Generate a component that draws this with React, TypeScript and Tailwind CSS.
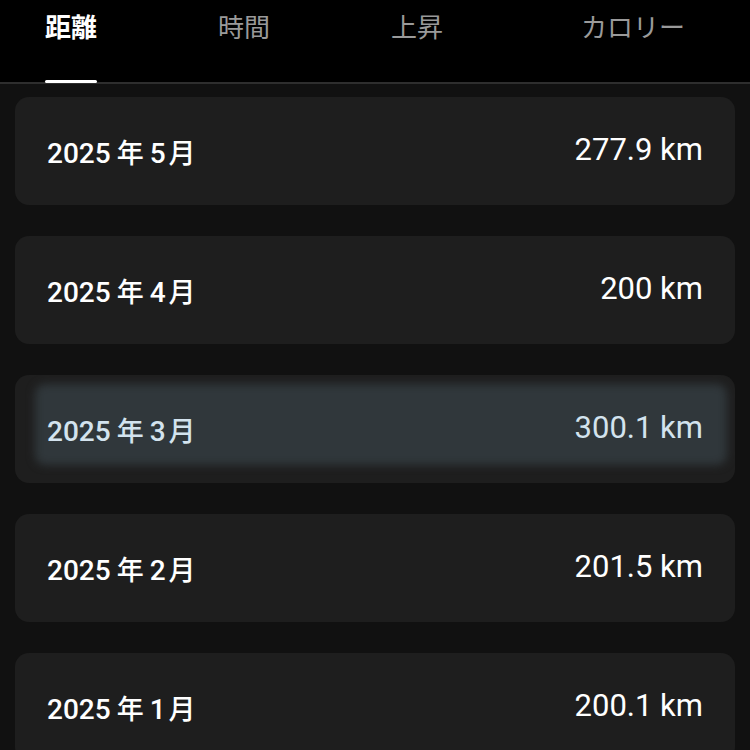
import React from 'react';

const tabs = [
  { label: '距離', active: true, cls: 'ml-[45px]' },
  { label: '時間', active: false, cls: 'ml-[121px]' },
  { label: '上昇', active: false, cls: 'ml-[121px]' },
  { label: 'カロリー', active: false, cls: 'ml-[138px]' },
];

const months = [
  { year: '2025', month: '5', value: '277.9 km' },
  { year: '2025', month: '4', value: '200 km' },
  { year: '2025', month: '3', value: '300.1 km', highlight: true },
  { year: '2025', month: '2', value: '201.5 km' },
  { year: '2025', month: '1', value: '200.1 km' },
];

export default function App() {
  return (
    <div className="w-[750px] h-[750px] overflow-hidden bg-[#111111] font-['Roboto','Noto_Sans_CJK_JP',sans-serif]">
      {/* Tabs */}
      <div className="h-[84px] bg-black border-b-2 border-[#2e2e2e] flex items-start font-['Noto_Sans_CJK_JP',sans-serif]">
        {tabs.map((t) => (
          <div key={t.label} className={`${t.cls} relative h-[82px] flex flex-col`}>
            <span
              className={`mt-[9px] text-[26px] leading-[34px] ${
                t.active ? 'text-white font-semibold' : 'text-[#9a9a9a]'
              }`}
            >
              {t.label}
            </span>
            {t.active && <div className="absolute left-0 right-0 bottom-[-1px] h-[3px] bg-white rounded-sm" />}
          </div>
        ))}
      </div>

      {/* Month list */}
      <div className="pt-[13px] px-[15px] flex flex-col gap-[31px]">
        {months.map((m) => {
          const color = m.highlight ? 'text-[#d3e3ee]' : 'text-white';
          return (
            <div
              key={m.month}
              className="relative h-[108px] rounded-[14px] bg-[#1e1e1e] overflow-hidden flex items-center justify-between px-[32px]"
            >
              {m.highlight && (
                <div className="absolute left-[20px] right-[8px] top-[9px] bottom-[18px] rounded-[10px] bg-[#30373b] blur-[4px]" />
              )}
              <span className={`relative mt-[6px] text-[28px] font-medium flex items-baseline ${color}`}>
                {m.year}
                <span className="mx-[6px] text-[27px]">年</span>
                {m.month}
                <span className="ml-[3px] text-[27px]">月</span>
              </span>
              <span className={`relative -mt-[2px] text-[31px] ${color}`}>{m.value}</span>
            </div>
          );
        })}
      </div>
    </div>
  );
}
